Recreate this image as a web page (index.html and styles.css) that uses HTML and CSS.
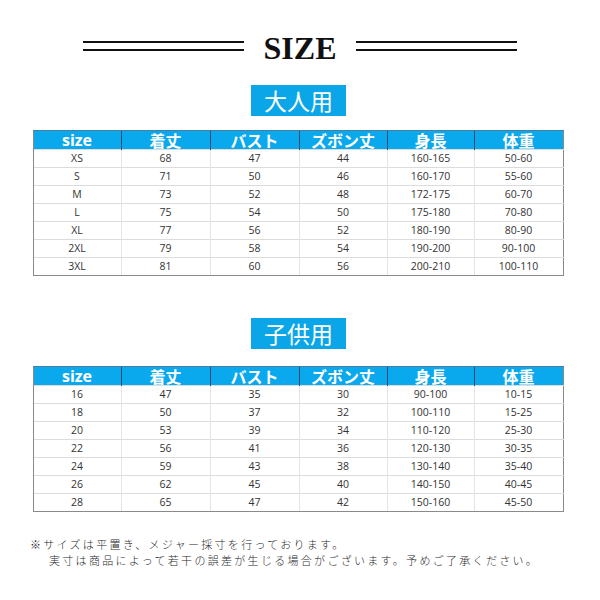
FILE: index.html
```html
<!DOCTYPE html>
<html lang="ja">
<head>
<meta charset="utf-8">
<title>SIZE</title>
<link rel="stylesheet" href="styles.css">
</head>
<body>
<div class="page">
  <div class="title">
    <span class="double-line"></span>
    <h1 class="title-text">SIZE</h1>
    <span class="double-line"></span>
  </div>

  <div class="badge badge-adult">大人用</div>
  <table class="size-table">
    <colgroup><col class="c1"><col class="c2"><col class="c3"><col class="c4"><col class="c5"><col class="c6"></colgroup>
    <thead>
      <tr><th class="size-head">size</th><th>着丈</th><th>バスト</th><th>ズボン丈</th><th>身長</th><th>体重</th></tr>
    </thead>
    <tbody>
      <tr><td>XS</td><td>68</td><td>47</td><td>44</td><td>160-165</td><td>50-60</td></tr>
      <tr><td>S</td><td>71</td><td>50</td><td>46</td><td>160-170</td><td>55-60</td></tr>
      <tr><td>M</td><td>73</td><td>52</td><td>48</td><td>172-175</td><td>60-70</td></tr>
      <tr><td>L</td><td>75</td><td>54</td><td>50</td><td>175-180</td><td>70-80</td></tr>
      <tr><td>XL</td><td>77</td><td>56</td><td>52</td><td>180-190</td><td>80-90</td></tr>
      <tr><td>2XL</td><td>79</td><td>58</td><td>54</td><td>190-200</td><td>90-100</td></tr>
      <tr><td>3XL</td><td>81</td><td>60</td><td>56</td><td>200-210</td><td>100-110</td></tr>
    </tbody>
  </table>

  <div class="badge badge-kids">子供用</div>
  <table class="size-table">
    <colgroup><col class="c1"><col class="c2"><col class="c3"><col class="c4"><col class="c5"><col class="c6"></colgroup>
    <thead>
      <tr><th class="size-head">size</th><th>着丈</th><th>バスト</th><th>ズボン丈</th><th>身長</th><th>体重</th></tr>
    </thead>
    <tbody>
      <tr><td>16</td><td>47</td><td>35</td><td>30</td><td>90-100</td><td>10-15</td></tr>
      <tr><td>18</td><td>50</td><td>37</td><td>32</td><td>100-110</td><td>15-25</td></tr>
      <tr><td>20</td><td>53</td><td>39</td><td>34</td><td>110-120</td><td>25-30</td></tr>
      <tr><td>22</td><td>56</td><td>41</td><td>36</td><td>120-130</td><td>30-35</td></tr>
      <tr><td>24</td><td>59</td><td>43</td><td>38</td><td>130-140</td><td>35-40</td></tr>
      <tr><td>26</td><td>62</td><td>45</td><td>40</td><td>140-150</td><td>40-45</td></tr>
      <tr><td>28</td><td>65</td><td>47</td><td>42</td><td>150-160</td><td>45-50</td></tr>
    </tbody>
  </table>

  <div class="notes">
    <p class="note note-1">※サイズは平置き、メジャー採寸を行っております。</p>
    <p class="note note-2">実寸は商品によって若干の誤差が生じる場合がございます。予めご了承ください。</p>
  </div>
</div>
</body>
</html>
```

FILE: styles.css
```css
html, body {
  margin: 0;
  padding: 0;
  background: #ffffff;
}

.page {
  width: 600px;
  height: 600px;
  overflow: hidden;
  display: flex;
  flex-direction: column;
  align-items: center;
}

.title {
  margin-top: 24px;
  height: 44px;
  width: 100%;
  display: flex;
  align-items: center;
  justify-content: center;
  gap: 20px;
}

.double-line {
  width: 161px;
  height: 6px;
  border-top: 2px solid #111;
  border-bottom: 2px solid #111;
}

.title-text {
  margin: 0;
  padding-top: 4px;
  font-family: "Liberation Serif", "DejaVu Serif", serif;
  font-weight: bold;
  font-size: 32px;
  line-height: 40px;
  color: #111;
}

.badge {
  width: 95px;
  height: 31px;
  background: #0ba6e8;
  color: #fff;
  font-family: "Noto Sans CJK JP", "Noto Sans", sans-serif;
  font-size: 23px;
  line-height: 31px;
  text-align: center;
  margin-left: -3px;
}

.badge-adult { margin-top: 17px; }
.badge-kids { margin-top: 42px; }

.size-table {
  width: 530px;
  margin-right: 4px;
  margin-top: 14px;
  border-collapse: collapse;
  table-layout: fixed;
  border: 1px solid #8a8a8a;
}

.badge-kids + .size-table { margin-top: 17px; }

.c1 { width: 88px; }
.c2 { width: 89px; }
.c3 { width: 89px; }
.c4 { width: 88px; }
.c5 { width: 87px; }
.c6 { width: 89px; }

.size-table th {
  height: 18px;
  padding: 0;
  background: #0aa8ec;
  color: #fff;
  font-family: "Noto Sans CJK JP", "Noto Sans", sans-serif;
  font-weight: bold;
  font-size: 16px;
  line-height: 18px;
  text-align: center;
  border-left: 1px solid #1c4e70;
  border-top: 1px solid #4a7ea0;
}

.size-table th:first-child { border-left: 1px solid #8a8a8a; }

.size-table th.size-head {
  font-family: "Open Sans", "Noto Sans", sans-serif;
  font-size: 16px;
}

.size-table td {
  height: 17px;
  padding: 0;
  font-family: "Open Sans", "Noto Sans", sans-serif;
  font-size: 10.5px;
  line-height: 17px;
  color: #333;
  text-align: center;
  border-top: 1px solid #dcdcdc;
  border-left: 1px solid #e4e4e4;
}

.size-table td:first-child { border-left: 1px solid #8a8a8a; }
.size-table tr:last-child td { border-bottom: 1px solid #8a8a8a; }

.notes {
  align-self: stretch;
  margin-top: 24px;
}

.note {
  margin: 0;
  font-family: "Noto Sans CJK JP", "Noto Sans", sans-serif;
  font-weight: 300;
  font-size: 11px;
  line-height: 16px;
  letter-spacing: 2.3px;
  color: #2a2a2a;
  white-space: nowrap;
}

.note-1 { padding-left: 30px; }
.note-2 { padding-left: 49px; }
```
